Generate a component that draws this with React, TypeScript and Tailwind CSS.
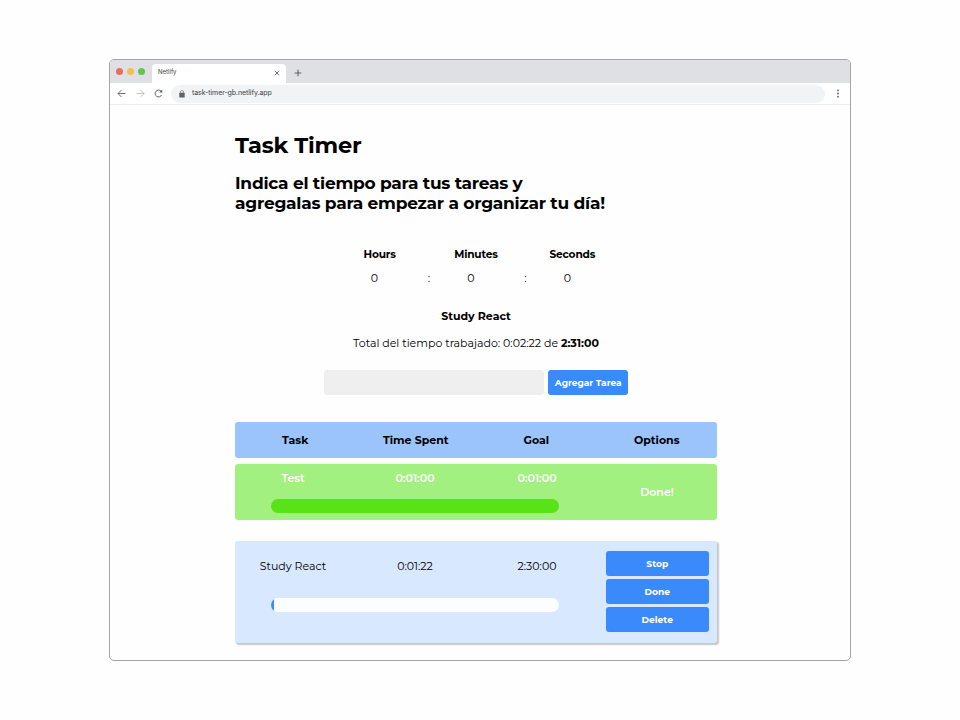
import React from "react";

type Task = { name: string; spent: string; goal: string };

function TaskCells({ task, className }: { task: Task; className: string }) {
  return (
    <div className={`-ml-[3px] grid w-[366px] grid-cols-3 text-center text-[11px] leading-[14px] ${className}`}>
      <span>{task.name}</span>
      <span>{task.spent}</span>
      <span>{task.goal}</span>
    </div>
  );
}

function Action({ label }: { label: string }) {
  return (
    <button className="h-[25px] w-[103.5px] rounded-[3px] bg-[#3b8afb] text-[9.1px] font-bold leading-[25px] text-white">
      {label}
    </button>
  );
}

function BrowserBar() {
  return (
    <header className="font-['Inter',sans-serif]">
      <div className="flex h-[23px] items-end bg-[#dee0e4]">
        <div className="flex h-[23px] w-[42px] items-center gap-[4px] pl-[6px]">
          <i className="size-[7px] rounded-full bg-[#ed6a5e]" />
          <i className="size-[7px] rounded-full bg-[#f5bd4f]" />
          <i className="size-[7px] rounded-full bg-[#61c454]" />
        </div>
        <div className="flex h-[19px] w-[134px] items-center justify-between rounded-t-[4px] bg-white pl-[6px] pr-[6px] text-[6px] leading-[8px] text-[#3c4043]">
          <span className="-mt-[3px]">Netlify</span>
          <svg className="-mt-[1px]" width="6" height="6" viewBox="0 0 6 6" stroke="#5f6368" strokeWidth=".9">
            <path d="M.8 .8l4.4 4.4M5.2 .8L.8 5.2" />
          </svg>
        </div>
        <svg className="mb-[6px] ml-[8px]" width="8" height="8" viewBox="0 0 8 8" stroke="#5f6368" strokeWidth="1.1">
          <path d="M4 .7v6.6M.7 4h6.6" />
        </svg>
      </div>
      <div className="flex h-[22px] items-center border-b border-[#ececee] bg-white pl-[7px]">
        <svg width="9" height="9" viewBox="0 0 9 9" fill="none" stroke="#5f6368" strokeWidth=".9">
          <path d="M8.4 4.5H1M4.5 1L1 4.5 4.5 8" />
        </svg>
        <svg className="ml-[10px]" width="9" height="9" viewBox="0 0 9 9" fill="none" stroke="#babcbe" strokeWidth=".9">
          <path d="M.6 4.5H8M4.5 1L8 4.5 4.5 8" />
        </svg>
        <svg className="ml-[9px]" width="9" height="9" viewBox="0 0 9 9" fill="none" stroke="#5f6368" strokeWidth="1">
          <path d="M7.6 6A3.4 3.4 0 1 1 7 2.2L8 3.3" />
          <path d="M8.2.6v3H5.2z" fill="#5f6368" stroke="none" />
        </svg>
        <div className="ml-[8px] flex h-[18px] w-[654px] items-center rounded-full bg-[#f1f3f4] pl-[8px] text-[7px] leading-[10px] tracking-[-0.08px] text-[#3c4043]">
          <svg className="mt-[1px]" width="6" height="8" viewBox="0 0 6 8" fill="none">
            <rect x="0.3" y="2.8" width="5.4" height="4.6" rx=".5" fill="#5f6368" />
            <path d="M1.5 3V2a1.5 1.5 0 0 1 3 0v1" stroke="#5f6368" strokeWidth=".6" />
          </svg>
          <span className="-mt-[2px] ml-[7px]">task-timer-gb.netlify.app</span>
        </div>
        <svg className="ml-[11px]" width="4" height="9" viewBox="0 0 4 9" fill="#5f6368">
          <circle cx="2" cy="1.3" r=".9" />
          <circle cx="2" cy="4.5" r=".9" />
          <circle cx="2" cy="7.7" r=".9" />
        </svg>
      </div>
    </header>
  );
}

export default function App() {
  return (
    <div className="h-[720px] w-[960px] overflow-hidden bg-[#fefefe] pl-[109px] pt-[59px] font-['Montserrat','Inter',sans-serif] text-black">
      <div className="h-[602px] w-[742px] overflow-hidden rounded-[5px] border-[1.5px] border-[#a4a4a4] bg-[#fefefe]">
        <BrowserBar />
        <main className="ml-[125px] w-[482px]">
          <h1 className="pt-[26px] text-[22.5px] font-bold leading-[28px] tracking-[-0.2px]">Task Timer</h1>
          <h2 className="mt-[14px] whitespace-nowrap text-[17px] font-bold leading-[20px] tracking-[-0.24px]">
            Indica el tiempo para tus tareas y
            <br />
            agregalas para empezar a organizar tu día!
          </h2>

          <div className="ml-[96.5px] mt-[35px] grid w-[289px] grid-cols-3 text-center text-[10.6px] font-bold leading-[14px] tracking-[-0.15px]">
            <span>Hours</span>
            <span>Minutes</span>
            <span>Seconds</span>
          </div>
          <div className="ml-[130px] mt-[9px] flex w-[220px] text-[11px] leading-[14px]">
            <span className="w-[19px] text-center">0</span>
            <span className="ml-[35px] w-[20px] text-center">:</span>
            <span className="ml-[22px] w-[20px] text-center">0</span>
            <span className="ml-[34.5px] w-[20px] text-center">:</span>
            <span className="ml-[22px] w-[20px] text-center">0</span>
          </div>

          <h3 className="mt-[24px] text-center text-[11px] font-bold leading-[14px]">Study React</h3>
          <p className="mt-[13px] text-center text-[11px] leading-[14px]">
            Total del tiempo trabajado: 0:02:22 de <b>2:31:00</b>
          </p>

          <form className="mt-[20px] flex gap-[4px] pl-[89px]">
            <input className="h-[25px] w-[220px] rounded-[3px] bg-[#efefef]" />
            <button type="button" className="h-[25px] w-[80.4px] whitespace-nowrap rounded-[3px] bg-[#3b8afb] text-[9px] font-bold leading-[25px] text-white">
              Agregar Tarea
            </button>
          </form>

          <div className="mt-[27px] grid h-[36px] grid-cols-4 items-center rounded-[3px] bg-[#9bc3fc] text-center text-[11px] font-bold leading-[14px]">
            <span>Task</span>
            <span>Time Spent</span>
            <span>Goal</span>
            <span>Options</span>
          </div>

          <section className="mt-[6px] flex h-[56px] items-center rounded-[3px] bg-[#a2f07f] text-white">
            <div className="h-[56px] w-[362px]">
              <TaskCells task={{ name: "Test", spent: "0:01:00", goal: "0:01:00" }} className="pt-[7px] font-semibold" />
              <div className="ml-[36px] mt-[14px] h-[14px] w-[288px] rounded-full bg-[#58e317]" />
            </div>
            <span className="w-[120px] text-center text-[11px] font-semibold">Done!</span>
          </section>

          <section className="mt-[21px] flex h-[102px] rounded-[3px] bg-[#d8e8fe] shadow-[1.5px_1.5px_1.5px_#00000038]">
            <div className="w-[362px]">
              <TaskCells task={{ name: "Study React", spent: "0:01:22", goal: "2:30:00" }} className="pt-[18px]" />
              <div className="ml-[36px] mt-[25px] h-[14px] w-[288px] overflow-hidden rounded-full bg-[#fbfdff]">
                <div className="h-full w-[3px] bg-[#3b8afb]" />
              </div>
            </div>
            <div className="ml-[8.5px] flex flex-col gap-[3px] pt-[10px]">
              <Action label="Stop" />
              <Action label="Done" />
              <Action label="Delete" />
            </div>
          </section>
        </main>
      </div>
    </div>
  );
}
